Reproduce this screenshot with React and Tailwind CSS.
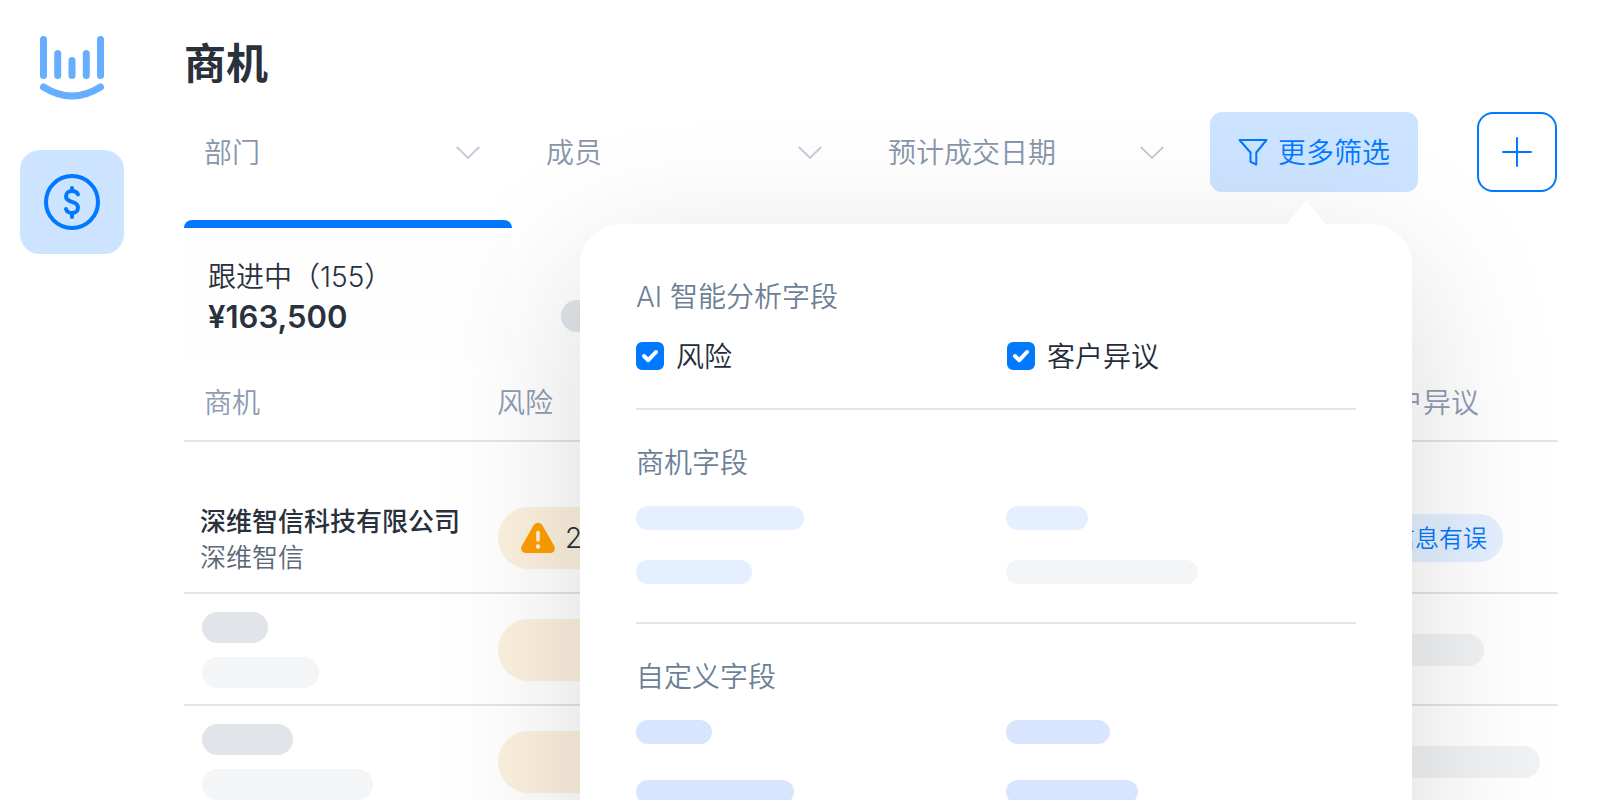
import React, { useState } from 'react';
import clsx from 'clsx';

const filters = [
  { id: 'dept', label: '部门' },
  { id: 'member', label: '成员' },
  { id: 'closeDate', label: '预计成交日期' },
];

function Logo() {
  return (
    <svg viewBox="0 0 64 64" className="h-16 w-16" fill="none" stroke="#66afff" strokeWidth="7" strokeLinecap="round" aria-hidden="true">
      <path d="M3.5 3.5v36M17.7 17.5v22M32 24.5v15M46.3 17.5v22M60.5 3.5v36" />
      <path d="M3.5 51Q32 69 60.5 51" />
    </svg>
  );
}

function DollarIcon() {
  return (
    <svg viewBox="0 0 56 56" className="h-14 w-14" fill="none" stroke="#0079ff" strokeWidth="4" strokeLinecap="round" strokeLinejoin="round" aria-hidden="true">
      <circle cx="28" cy="28" r="26" />
      <path d="M34 20.4C33.2 18.2 30.9 17 28 17c-3.400 0-6 2.100-6 5.200 0 3.300 2.600 4.600 6 5.600s6 2.300 6 5.700c0 3.300-2.600 5.500-6 5.500-3 0-5.300-1.500-6-4" />
      <path d="M28 14v3M28 39v4" />
    </svg>
  );
}

function Chevron() {
  return (
    <svg viewBox="0 0 24 14" className="pointer-events-none absolute top-[34px] right-6 h-3.5 w-6" fill="none" stroke="#c3cad6" strokeWidth="1.8" aria-hidden="true">
      <path d="M.8 1 12 12 23.200 1" />
    </svg>
  );
}

function FunnelIcon() {
  return (
    <svg viewBox="0 0 30 28" className="h-7 w-[30px]" fill="none" stroke="currentColor" strokeWidth="2" strokeLinejoin="round" aria-hidden="true">
      <path d="M1.500 2h27L18.300 14.500V26.500L12.500 23.800V14.500Z" />
    </svg>
  );
}

function WarningIcon() {
  return (
    <svg viewBox="0 0 34 32" className="h-8 w-[34px]" aria-hidden="true">
      <path d="M12.600 3.200C14.500-.2 19.500-.2 21.400 3.200L33.100 23.700C35 27.100 33 31 29.200 31H4.800C1 31-1 27.100.9 23.700Z" fill="#ff9f00" />
      <path d="M17 10.500v7.500" stroke="#fff3e0" strokeWidth="3.600" strokeLinecap="round" />
      <circle cx="17" cy="24.500" r="2.300" fill="#fff3e0" />
    </svg>
  );
}

function Bar({ className }) {
  return <div className={clsx('rounded-full', className)} />;
}

function FilterSelect({ id, label }) {
  return (
    <div className="relative flex-1">
      <select
        id={id}
        aria-label={label}
        className="h-20 w-full appearance-none rounded-2xl bg-transparent px-5 pt-0.5 text-[28px] font-[350] text-[#8796ab] outline-none"
      >
        <option>{label}</option>
      </select>
      <Chevron />
    </div>
  );
}

function Checkbox({ label }) {
  const [checked, setChecked] = useState(true);

  return (
    <label className="flex items-start gap-3 text-[28px] leading-[42px] font-[350] text-[#242c38]">
      <span className="mt-1.5 grid">
        <input
          type="checkbox"
          checked={checked}
          onChange={() => setChecked(!checked)}
          className="col-start-1 row-start-1 h-7 w-7 appearance-none rounded-md border-2 border-[#0079ff] checked:bg-[#0079ff]"
        />
        {checked && (
          <svg viewBox="0 0 28 28" className="pointer-events-none col-start-1 row-start-1 h-7 w-7" fill="none" stroke="#fff" strokeWidth="4" strokeLinecap="round" strokeLinejoin="round" aria-hidden="true">
            <path d="M8 14l4.300 4.200L20 10" />
          </svg>
        )}
      </span>
      {label}
    </label>
  );
}

function FieldGroup({ title, children, last }) {
  return (
    <section className={clsx('flex flex-col', !last && 'mb-8 border-b-2 border-[#e1e5ea]')}>
      <h2 className="text-[28px] leading-[42px] font-[350] text-[#6d7f96]">{title}</h2>
      {children}
    </section>
  );
}

function FilterPopover() {
  return (
    <div className="absolute top-28 right-1.5 z-10 h-[800px] w-[832px] rounded-[40px] bg-white px-14 pt-[52px] shadow-[0_40px_150px_rgba(0,0,0,0.15)]">
      <svg viewBox="0 0 40 24" className="absolute -top-[23px] right-[86px] h-6 w-10" fill="#fff" aria-hidden="true">
        <path d="M0 24V23.500L18 2Q20 0 22 2L40 23.500V24Z" />
      </svg>
      <FieldGroup title="AI 智能分析字段">
        <div className="grid grid-cols-[371px_1fr] pt-[18px] pb-[30px]">
          <Checkbox label="风险" />
          <Checkbox label="客户异议" />
        </div>
      </FieldGroup>
      <FieldGroup title="商机字段">
        <div className="grid grid-cols-[370px_1fr] gap-y-[30px] pt-[22px] pb-[38px]">
          <Bar className="h-6 w-[168px] bg-[#e4f0ff]" />
          <Bar className="h-6 w-[82px] bg-[#e4f0ff]" />
          <Bar className="h-6 w-[116px] bg-[#e4f0ff]" />
          <Bar className="h-6 w-48 bg-[#f3f5f7]" />
        </div>
      </FieldGroup>
      <FieldGroup title="自定义字段" last>
        <div className="grid grid-cols-[370px_1fr] gap-y-9 pt-[22px]">
          <Bar className="h-6 w-[76px] bg-[#d8e5ff]" />
          <Bar className="h-6 w-[104px] bg-[#d8e5ff]" />
          <Bar className="h-6 w-[158px] bg-[#d8e5ff]" />
          <Bar className="h-6 w-[132px] bg-[#d8e5ff]" />
        </div>
      </FieldGroup>
    </div>
  );
}

function PlaceholderRow({ name, alias, objection }) {
  return (
    <tr className="h-28 border-b-2 border-[#e1e5ea]">
      <td className="pt-0.5 pl-[18px]">
        <Bar className={clsx('mb-[14px] h-[31px] bg-[#e1e5ea]', name)} />
        <Bar className={clsx('h-[31px] bg-[#f3f5f7]', alias)} />
      </td>
      <td className="pt-0.5 pl-px">
        <Bar className="h-[62px] w-36 bg-[#fcf1de]" />
      </td>
      <td className="pt-0.5">
        <Bar className={clsx('h-8 bg-[#f0f2f4]', objection)} />
      </td>
    </tr>
  );
}

function DealTable() {
  return (
    <table className="w-full table-fixed border-collapse text-left">
      <thead>
        <tr className="h-[79px] border-b-2 border-[#e1e5ea] text-[28px] text-[#8f9bb3]">
          <th className="w-[313px] pt-1 pl-5 font-[350]">商机</th>
          <th className="pt-1 font-[350]">风险</th>
          <th className="w-[191px] pt-1 font-[350]">客户异议</th>
        </tr>
      </thead>
      <tbody>
        <tr className="h-[152px] border-b-2 border-[#e1e5ea]">
          <td className="pt-[46px] pl-4 text-[26px] leading-9">
            <div className="font-medium text-[#29313d]">深维智信科技有限公司</div>
            <div className="font-[350] text-[#5b6878]">深维智信</div>
          </td>
          <td className="pt-[42px] pl-px">
            <div className="flex h-[62px] w-36 items-center gap-2.5 rounded-full bg-[#fcf1de] pl-[23px] text-[28px] font-[350] text-[#29313d]">
              <WarningIcon />2
            </div>
          </td>
          <td className="pt-[42px]">
            <span className="ml-2 inline-flex h-12 items-center rounded-full bg-[#e4f0ff] px-4 pt-0.5 text-2xl font-[350] text-[#0079ff]">
              信息有误
            </span>
          </td>
        </tr>
        <PlaceholderRow name="w-[66px]" alias="w-[117px]" objection="w-[117px]" />
        <PlaceholderRow name="w-[91px]" alias="w-[171px]" objection="w-[173px]" />
      </tbody>
    </table>
  );
}

export default function App() {
  const [open, setOpen] = useState(true);

  return (
    <div className="flex h-screen overflow-hidden bg-white font-['Inter','Noto_Sans_CJK_SC',sans-serif]">
      <aside className="flex w-36 shrink-0 flex-col items-center gap-[50px] pt-9">
        <Logo />
        <nav>
          <button type="button" aria-label="商机" className="flex h-[104px] w-[104px] items-center justify-center rounded-[20px] bg-[#cce4ff]">
            <DollarIcon />
          </button>
        </nav>
      </aside>

      <main className="min-w-0 flex-1 pt-10 pr-[42px] pl-10">
        <h1 className="text-[42px] leading-[48px] font-bold text-[#29313d]">商机</h1>

        <div className="mt-6 flex pr-px">
          <div className="flex flex-1 gap-[22px]">
            {filters.map((f) => (
              <FilterSelect key={f.id} id={f.id} label={f.label} />
            ))}
            <div className="relative">
              <button
                type="button"
                aria-expanded={open}
                onClick={() => setOpen(!open)}
                className="flex h-20 w-52 items-center justify-center gap-2.5 rounded-xl bg-[#cce4ff] text-[28px] font-[350] text-[#0079ff]"
              >
                <FunnelIcon />
                <span className="pt-0.5">更多筛选</span>
              </button>
              {open && <FilterPopover />}
            </div>
          </div>
          <button type="button" aria-label="添加" className="relative z-20 ml-[59px] flex h-20 w-20 items-center justify-center rounded-2xl border-2 border-[#0079ff] bg-white">
            <svg viewBox="0 0 30 30" className="h-[30px] w-[30px]" stroke="#0079ff" strokeWidth="2" strokeLinecap="round" aria-hidden="true">
              <path d="M15 1v28M1 15h28" />
            </svg>
          </button>
        </div>

        <div className="mt-7 flex gap-4">
          <section className="h-[142px] w-[328px] overflow-hidden rounded-t-lg bg-[#fefefe] text-[#29313d]">
            <div className="h-2 bg-[#0079ff]" />
            <div className="px-6 pt-[29px]">
              <div className="text-[28px] leading-10 font-[350]">跟进中（155）</div>
              <div className="text-[31px] leading-10 font-semibold">¥163,500</div>
            </div>
          </section>
          <section className="flex h-[142px] w-[328px] items-end px-[33px] pb-[30px]">
            <Bar className="h-8 w-40 bg-[#e1e5ea]" />
          </section>
        </div>

        <DealTable />
      </main>
    </div>
  );
}
